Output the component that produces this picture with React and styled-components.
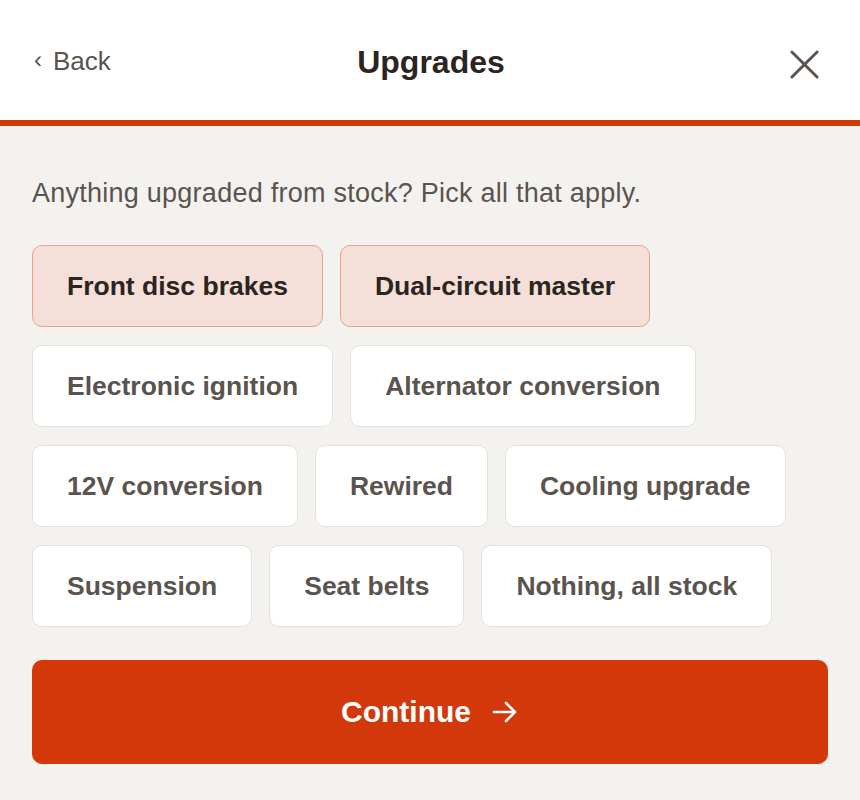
import React, { useState } from 'react';
import styled, { createGlobalStyle } from 'styled-components';

const GlobalStyle = createGlobalStyle`
	html, body {
		margin: 0;
		padding: 0;
		background: #f4f2ef;
		font-family: "Liberation Sans", Arial, sans-serif;
	}
`;

const OPTIONS = [
	'Front disc brakes',
	'Dual-circuit master',
	'Electronic ignition',
	'Alternator conversion',
	'12V conversion',
	'Rewired',
	'Cooling upgrade',
	'Suspension',
	'Seat belts',
	'Nothing, all stock',
];

function App() {
	const [picked, setPicked] = useState(['Front disc brakes', 'Dual-circuit master']);

	const toggle = (name) =>
		setPicked((cur) => (cur.includes(name) ? cur.filter((n) => n !== name) : [...cur, name]));

	return (
		<Page>
			<GlobalStyle />
			<Header>
				<BackLink>
					<Chevron>‹</Chevron> Back
				</BackLink>
				<Title>Upgrades</Title>
				<CloseButton aria-label="Close">
					<svg width="30" height="30" viewBox="0 0 30 30" fill="none">
						<path d="M2 2 L28 28 M28 2 L2 28" stroke="#5a534e" strokeWidth="3" strokeLinecap="round" />
					</svg>
				</CloseButton>
			</Header>
			<Body>
				<Prompt>Anything upgraded from stock? Pick all that apply.</Prompt>
				<Chips>
					{OPTIONS.map((name) => (
						<Chip key={name} selected={picked.includes(name)} onClick={() => toggle(name)}>
							{name}
						</Chip>
					))}
				</Chips>
				<ContinueButton>
					Continue
					<svg width="28" height="28" viewBox="0 0 28 28" fill="none">
						<path
							d="M3 14 H24 M15 5 L24 14 L15 23"
							stroke="#fff"
							strokeWidth="2.6"
							strokeLinecap="round"
							strokeLinejoin="round"
						/>
					</svg>
				</ContinueButton>
			</Body>
		</Page>
	);
}

const Page = styled.div`
	min-height: 800px;
	background: #f4f2ef;
`;

const Header = styled.header`
	height: 120px;
	background: #fff;
	border-bottom: 6px solid #d03a0b;
	display: grid;
	grid-template-columns: 1fr auto 1fr;
	align-items: center;
	padding: 0 32px 0 34px;
`;

const BackLink = styled.button`
	justify-self: start;
	background: none;
	border: none;
	padding: 0;
	margin-top: 2px;
	font-family: inherit;
	font-size: 26px;
	color: #5a534e;
	display: flex;
	align-items: center;
	gap: 11px;
	cursor: pointer;
`;

const Chevron = styled.span`
	font-size: 24px;
	line-height: 1;
	margin-top: -3px;
`;

const Title = styled.h1`
	margin: 4px 0 0;
	font-size: 32px;
	font-weight: 700;
	color: #2b2420;
`;

const CloseButton = styled.button`
	justify-self: end;
	background: none;
	border: none;
	padding: 0;
	margin: 8px 9px 0 0;
	display: flex;
	cursor: pointer;

	svg {
		width: 29px;
		height: 29px;
	}
`;

const Body = styled.main`
	padding: 52px 32px 0;
	display: flex;
	flex-direction: column;
`;

const Prompt = styled.p`
	margin: 0;
	font-size: 27px;
	line-height: 30px;
	letter-spacing: 0.25px;
	color: #5a534e;
`;

const Chips = styled.div`
	margin-top: 37px;
	display: flex;
	flex-wrap: wrap;
	gap: 18px 17px;
	max-width: 790px;
`;

const Chip = styled.button`
	height: 82px;
	padding: 0 34px;
	border-radius: 10px;
	font-family: inherit;
	font-size: 26.5px;
	font-weight: 700;
	cursor: pointer;
	border: 1.5px solid ${(p) => (p.selected ? '#e8a48d' : '#e4e0dc')};
	background: ${(p) => (p.selected ? '#f4e0d9' : '#fff')};
	color: ${(p) => (p.selected ? '#2b2420' : '#5a534e')};
`;

const ContinueButton = styled.button`
	margin-top: 33px;
	height: 104px;
	border: none;
	border-radius: 10px;
	background: #d3380a;
	color: #fff;
	font-family: inherit;
	font-size: 30px;
	font-weight: 700;
	display: flex;
	align-items: center;
	justify-content: center;
	gap: 20px;
	cursor: pointer;
`;

export default App;
